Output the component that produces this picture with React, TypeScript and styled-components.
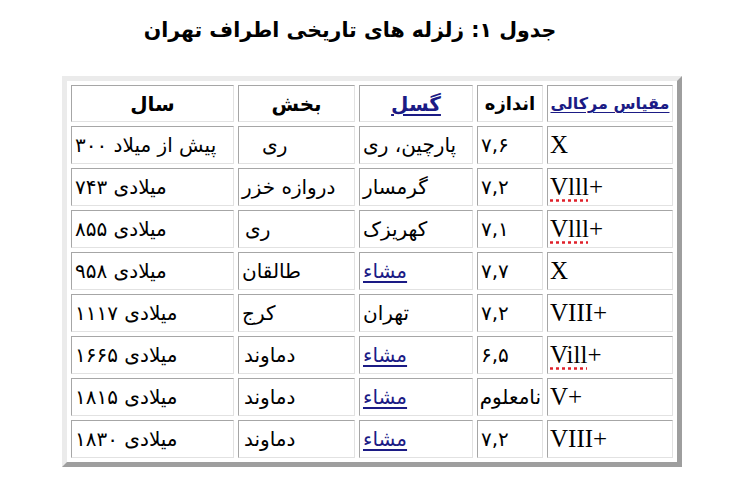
import React from "react";
import styled, { createGlobalStyle } from "styled-components";

const Global = createGlobalStyle`
  html, body { margin: 0; padding: 0; background: #ffffff; }
  body { font-family: "Liberation Serif", "DejaVu Sans", serif; color: #000; }
`;

const Page = styled.div`
  width: 749px;
  height: 490px;
  padding: 14px 0 0 62px;
  box-sizing: border-box;
`;

const Title = styled.h1`
  margin: 0;
  width: 576px;
  height: 62px;
  text-align: center;
  direction: rtl;
  font-family: "DejaVu Sans", sans-serif;
  font-weight: bold;
  font-size: 20.5px;
  line-height: 32px;
`;

const Table = styled.table`
  box-sizing: border-box;
  width: 620px;
  border-collapse: separate;
  border-spacing: 4px;
  border: 5px solid;
  border-color: #ebebeb #9e9e9e #9e9e9e #ebebeb;
  table-layout: fixed;
`;

const Cell = styled.td<{ $w?: number; $indent?: number; $head?: boolean; $size?: number }>`
  box-sizing: border-box;
  width: ${(p) => (p.$w ? `${p.$w}px` : "auto")};
  height: ${(p) => (p.$head ? "37px" : "38px")};
  padding: 0 1px 0 ${(p) => 1 + (p.$indent || 0)}px;
  border: 1px solid;
  border-color: #a6a6a6 #e2e2e2 #e2e2e2 #a6a6a6;
  direction: rtl;
  text-align: ${(p) => (p.$head ? "center" : "left")};
  vertical-align: middle;
  font-size: ${(p) => p.$size || (p.$head ? 16 : 20)}px;
  font-weight: ${(p) => (p.$head ? "bold" : "normal")};
  font-family: "DejaVu Sans", sans-serif;
  white-space: nowrap;
  overflow: ${(p) => (p.$head ? "visible" : "hidden")};
`;

const LatinCell = styled(Cell)`
  direction: ltr;
  font-family: "Liberation Serif", serif;
  font-size: 25px;
`;

const Link = styled.span`
  color: #1b1b85;
  text-decoration: underline;
  text-underline-offset: 3px;
`;

const Spell = styled.span`
  text-decoration: underline dotted #e0202a;
  text-underline-offset: 4px;
`;

const widths = [163, 117, 114, 66, 126];

type Row = {
  year: string;
  region: string;
  regionIndent?: number;
  fault: string;
  faultLink?: boolean;
  mag: string;
  merc: React.ReactNode;
};

const rows: Row[] = [
  { year: "پیش از میلاد ۳۰۰", region: "ری", regionIndent: 22, fault: "پارچین، ری", mag: "۷,۶", merc: "X" },
  { year: "میلادی ۷۴۳", region: "دروازه خزر", fault: "گرمسار", mag: "۷,۲", merc: (<><Spell>Vlll</Spell>+</>) },
  { year: "میلادی ۸۵۵", region: "ری", regionIndent: 5, fault: "کهریزک", mag: "۷,۱", merc: (<><Spell>Vlll</Spell>+</>) },
  { year: "میلادی ۹۵۸", region: "طالقان", fault: "مشاء", faultLink: true, mag: "۷,۷", merc: "X" },
  { year: "میلادی ۱۱۱۷", region: "کرج", fault: "تهران", mag: "۷,۲", merc: "VIII+" },
  { year: "میلادی ۱۶۶۵", region: "دماوند", regionIndent: 4, fault: "مشاء", faultLink: true, mag: "۶,۵", merc: (<><Spell>Vill</Spell>+</>) },
  { year: "میلادی ۱۸۱۵", region: "دماوند", regionIndent: 4, fault: "مشاء", faultLink: true, mag: "نامعلوم", merc: "V+" },
  { year: "میلادی ۱۸۳۰", region: "دماوند", regionIndent: 4, fault: "مشاء", faultLink: true, mag: "۷,۲", merc: "VIII+" },
];

export default function App() {
  return (
    <>
      <Global />
      <Page>
        <Title>جدول ۱: زلزله های تاریخی اطراف تهران</Title>
        <Table>
          <tbody>
            <tr>
              <Cell $head $size={20} $w={widths[0]}>سال</Cell>
              <Cell $head $size={20} $w={widths[1]}>بخش</Cell>
              <Cell $head $size={20} $w={widths[2]}><Link>گسل</Link></Cell>
              <Cell $head $size={18} $w={widths[3]}>اندازه</Cell>
              <Cell $head $size={16} $w={widths[4]}><Link>مقیاس مرکالی</Link></Cell>
            </tr>
            {rows.map((r, i) => (
              <tr key={i}>
                <Cell $indent={2}>{r.year}</Cell>
                <Cell $indent={r.regionIndent || 2}>{r.region}</Cell>
                <Cell $indent={2}>
                  {r.faultLink ? <Link>{r.fault}</Link> : r.fault}
                </Cell>
                <Cell $indent={2}>{r.mag}</Cell>
                <LatinCell $indent={1}>{r.merc}</LatinCell>
              </tr>
            ))}
          </tbody>
        </Table>
      </Page>
    </>
  );
}
